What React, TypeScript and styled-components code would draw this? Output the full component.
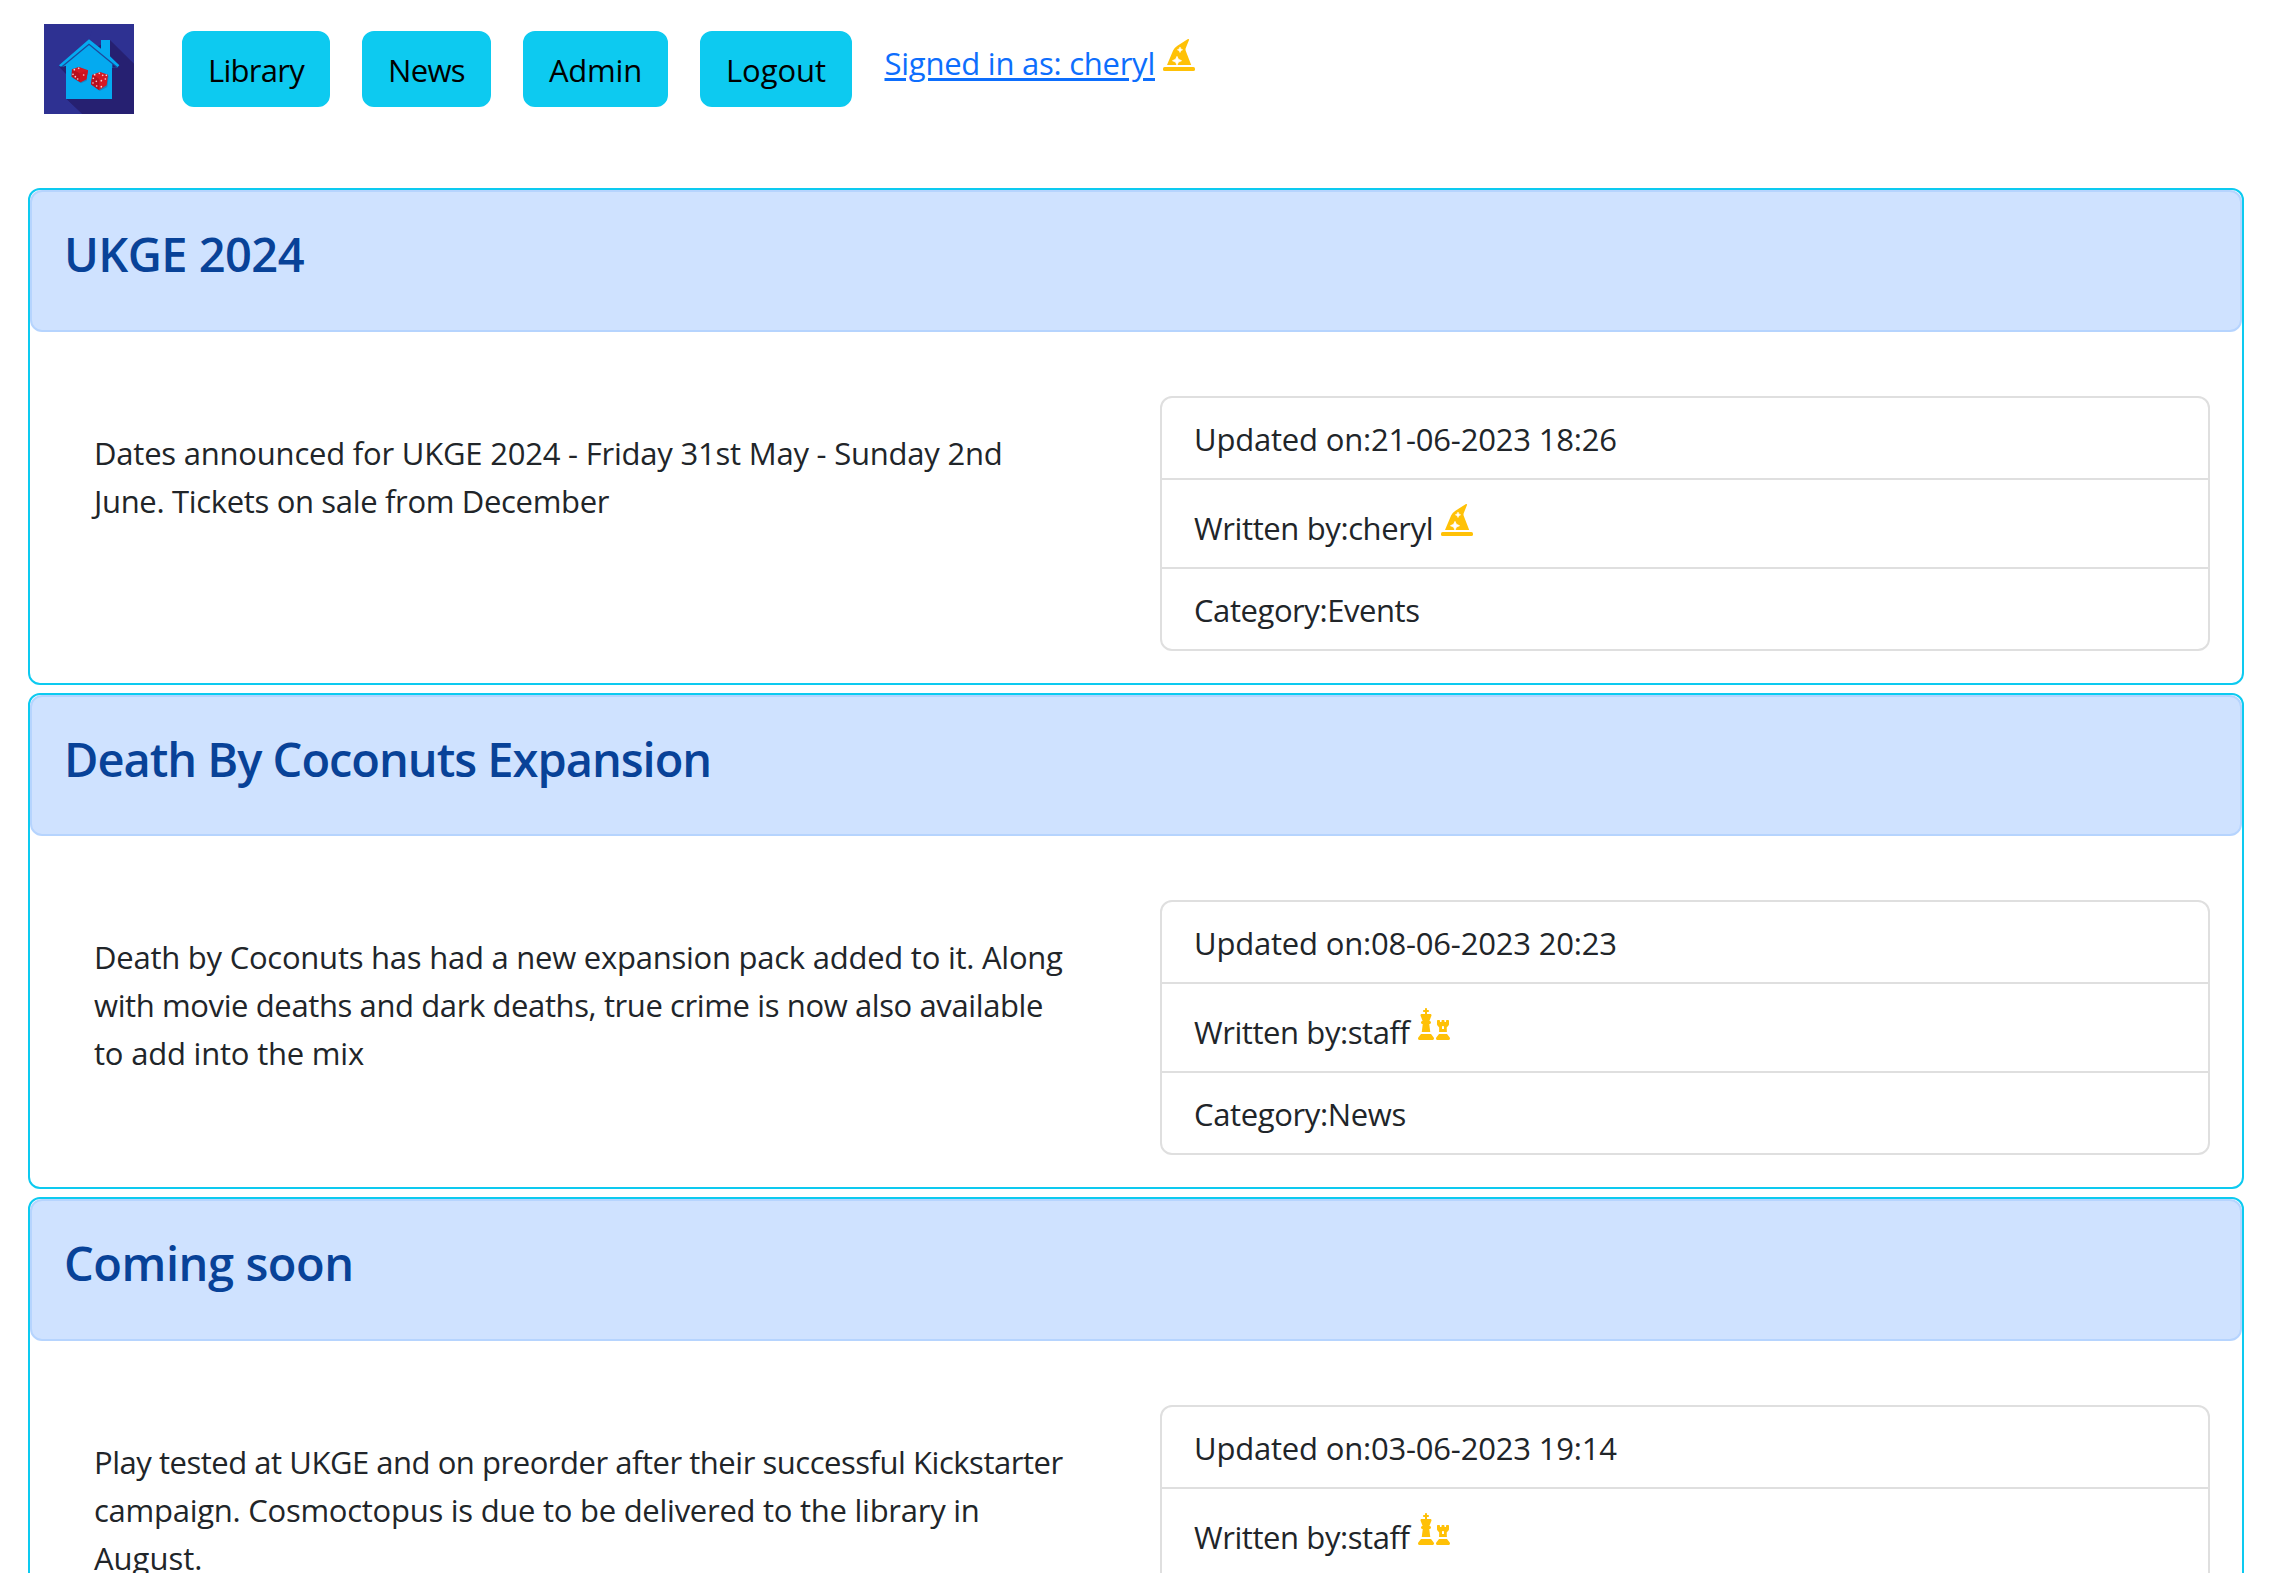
import React from 'react';
import styled, { createGlobalStyle } from 'styled-components';
import { FaChess } from 'react-icons/fa6';

const GlobalStyle = createGlobalStyle`
  *, *::before, *::after { box-sizing: border-box; }
  html { overflow: hidden; }
  body {
    margin: 0;
    background: #fff;
    color: #212529;
    font-family: "Open Sans", "Noto Sans", sans-serif;
    font-size: 31px;
    line-height: 48px;
  }
`;

const Page = styled.div`
  height: 100vh;
  overflow: hidden;
`;

const Navbar = styled.header`
  display: flex;
  align-items: flex-start;
  height: 188px;
  padding: 24px 44px 0;
`;

const Logo = styled.svg`
  display: block;
  flex: none;
  width: 90px;
  height: 90px;
`;

const NavLinks = styled.nav`
  display: flex;
  gap: 32px;
  margin: 7px 0 0 48px;
`;

const NavButton = styled.button<{ $width: number; $tracking: number }>`
  width: ${(p) => p.$width}px;
  height: 76px;
  padding: 1px 0 0;
  border: 2px solid #0dcaf0;
  border-radius: 12px;
  background: #0dcaf0;
  color: #000;
  font: inherit;
  letter-spacing: ${(p) => p.$tracking}px;
  white-space: nowrap;
`;

const Account = styled.div`
  display: flex;
  align-items: flex-start;
  gap: 8px;
  margin: 15px 0 0 32.5px;
`;

const AccountLink = styled.a`
  color: #0d6efd;
  letter-spacing: -0.25px;
  text-decoration: underline;
  text-decoration-thickness: 3px;
  text-underline-offset: 3px;
  white-space: nowrap;
`;

const RoleIcon = styled.span`
  display: flex;
  flex: none;
  width: 32px;
  height: 32px;
  color: #ffc107;
  svg { width: 100%; height: 100%; }
`;

const Feed = styled.main`
  display: flex;
  flex-direction: column;
  gap: 8px;
  padding: 0 27px 0 28px;
`;

const Card = styled.article`
  height: 496.5px;
  border: 2px solid #0dcaf0;
  border-radius: 12px;
`;

const CardHeader = styled.div`
  height: 141.9px;
  padding: 34px 32px 0;
  border: 2px solid #b6d4fe;
  border-radius: 12px;
  background: #cfe2ff;
`;

const Title = styled.h2<{ $tracking: number }>`
  margin: 0;
  color: #084298;
  font-size: 47px;
  font-weight: 600;
  line-height: 57.6px;
  letter-spacing: ${(p) => p.$tracking}px;
  white-space: nowrap;
`;

const CardBody = styled.div`
  display: grid;
  grid-template-columns: 1fr 1050px;
  align-items: start;
  padding: 64px 32px 0;
`;

const Summary = styled.p`
  margin: 0;
  padding: 33px 0 0 32px;
`;

const Line = styled.span<{ $tracking: number }>`
  display: block;
  letter-spacing: ${(p) => p.$tracking}px;
  white-space: nowrap;
`;

const Details = styled.ul`
  margin: 0;
  padding: 0;
  list-style: none;
  border: 2px solid #dfdfdf;
  border-radius: 12px;
`;

const Detail = styled.li<{ $tracking: number; $author?: boolean }>`
  display: flex;
  align-items: flex-start;
  gap: ${(p) => (p.$author ? 8 : 0)}px;
  padding: ${(p) => (p.$author ? 24 : 17)}px 32px 15px;
  letter-spacing: ${(p) => p.$tracking}px;
  white-space: nowrap;
  & + & { border-top: 2px solid #dfdfdf; }
`;

type Tracked = { text: string; tracking: number };
type Post = {
  title: Tracked;
  lines: Tracked[];
  updated: Tracked;
  author: Tracked;
  role: 'wizard' | 'staff';
  category: Tracked;
};

const t = (text: string, tracking: number): Tracked => ({ text, tracking });

const posts: Post[] = [
  {
    title: t('UKGE 2024', -0.55),
    lines: [
      t('Dates announced for UKGE 2024 - Friday 31st May - Sunday 2nd', -0.21),
      t('June. Tickets on sale from December', -0.33),
    ],
    updated: t('Updated on:21-06-2023 18:26', -0.19),
    author: t('Written by:cheryl', -0.38),
    role: 'wizard',
    category: t('Category:Events', -0.43),
  },
  {
    title: t('Death By Coconuts Expansion', -1.02),
    lines: [
      t('Death by Coconuts has had a new expansion pack added to it. Along', -0.24),
      t('with movie deaths and dark deaths, true crime is now also available', -0.39),
      t('to add into the mix', -0.2),
    ],
    updated: t('Updated on:08-06-2023 20:23', -0.19),
    author: t('Written by:staff', -0.42),
    role: 'staff',
    category: t('Category:News', -0.36),
  },
  {
    title: t('Coming soon', -0.45),
    lines: [
      t('Play tested at UKGE and on preorder after their successful Kickstarter', -0.47),
      t('campaign. Cosmoctopus is due to be delivered to the library in', -0.26),
      t('August.', 0),
    ],
    updated: t('Updated on:03-06-2023 19:14', -0.19),
    author: t('Written by:staff', -0.42),
    role: 'staff',
    category: t('Category:News', -0.36),
  },
];

const navItems = [
  { label: 'Library', width: 148, tracking: -0.72 },
  { label: 'News', width: 129, tracking: -0.63 },
  { label: 'Admin', width: 145, tracking: -0.2 },
  { label: 'Logout', width: 152, tracking: -0.06 },
];

const WizardHat = () => (
  <svg viewBox="0 0 32 32" fill="currentColor">
    <path d="M25 .1C25.7-.2 26.3.3 26 1L22.7 9.3Q22.3 10.5 22.7 11.7L28.2 26H4L10.1 11.6Q11.4 8.6 14.4 6.7Z" />
    <rect y="28" width="32" height="4" rx="1.6" />
    <path
      fill="#fff"
      d="M17 8L17.9 9.9L19.7 10.8L17.9 11.7L17 13.6L16.1 11.7L14.3 10.8L16.1 9.9Z"
      stroke="#fff"
      strokeWidth=".5"
    />
    <path
      fill="#fff"
      d="M14 17.4L15.4 20.3L18.5 21.7L15.4 23.1L14 26L12.6 23.1L9.5 21.7L12.6 20.3Z"
      stroke="#fff"
      strokeWidth=".8"
      strokeLinejoin="round"
    />
  </svg>
);

const Pips = ({ points }: { points: [number, number][] }) => (
  <g fill="#f6d3d6">
    {points.map(([x, y]) => <circle key={`${x}-${y}`} cx={x} cy={y} r="2.5" />)}
  </g>
);

const HouseLogo = () => (
  <Logo viewBox="0 0 270 270">
    <rect width="270" height="270" fill="#2e3192" />
    <path d="M198 48L270 119V270H114L66 224L45 128Z" fill="#262071" />
    <path d="M45 128L66 149V225L114 270H0V0H150L135 46Z" fill="#2e3192" />
    <path d="M171 74V48H198V97L226 124L219 131H204V225H66V131H52L45 124L135 46Z" fill="#04aaf0" />
    <path d="M52 130L135 61L219 130" fill="none" stroke="#1c4a9c" strokeWidth="4" />
    <path d="M46 127L54 129L66 125V149Z" fill="#262071" />
    <path d="M205 120L219 131H205Z" fill="#262071" />
    <path d="M86 138L103 128L132 139L128 170L111 178L87 163Z" fill="#1684c4" />
    <path d="M84 136L105 129L132 139L127 166L109 175L83 158Z" fill="#d51924" />
    <path d="M84 136L107 148L109 175L83 158Z" fill="#b90f1e" />
    <path d="M107 148L132 139L127 166L109 175Z" fill="#ce1320" />
    <Pips points={[[91, 137], [104, 133], [87, 151], [94, 158], [101, 165], [119, 153]]} />
    <path d="M145 155L169 144L194 155L190 189L167 201L144 184Z" fill="#1684c4" />
    <path d="M145 152L168 144L192 152L188 184L165 198L141 181Z" fill="#d51924" />
    <path d="M145 152L166 165L165 198L141 181Z" fill="#b90f1e" />
    <Pips points={[[152, 152], [166, 148], [176, 154], [187, 154], [148, 163], [157, 172], [147, 177], [158, 186], [172, 170], [184, 165], [172, 188]]} />
  </Logo>
);

export default function App() {
  return (
    <Page>
      <GlobalStyle />
      <Navbar>
        <HouseLogo />
        <NavLinks>
          {navItems.map((n) => (
            <NavButton key={n.label} $width={n.width} $tracking={n.tracking}>{n.label}</NavButton>
          ))}
        </NavLinks>
        <Account>
          <AccountLink href="#">Signed in as: cheryl</AccountLink>
          <RoleIcon><WizardHat /></RoleIcon>
        </Account>
      </Navbar>
      <Feed>
        {posts.map((p) => (
          <Card key={p.title.text}>
            <CardHeader>
              <Title $tracking={p.title.tracking}>{p.title.text}</Title>
            </CardHeader>
            <CardBody>
              <Summary>
                {p.lines.map((l) => <Line key={l.text} $tracking={l.tracking}>{l.text}</Line>)}
              </Summary>
              <Details>
                <Detail $tracking={p.updated.tracking}>{p.updated.text}</Detail>
                <Detail $tracking={p.author.tracking} $author>
                  {p.author.text}
                  <RoleIcon>{p.role === 'wizard' ? <WizardHat /> : <FaChess />}</RoleIcon>
                </Detail>
                <Detail $tracking={p.category.tracking}>{p.category.text}</Detail>
              </Details>
            </CardBody>
          </Card>
        ))}
      </Feed>
    </Page>
  );
}
